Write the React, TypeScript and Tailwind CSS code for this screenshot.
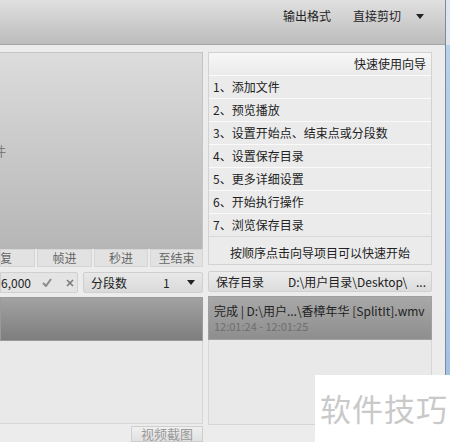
import React from "react";

const steps = [
  "1、添加文件",
  "2、预览播放",
  "3、设置开始点、结束点或分段数",
  "4、设置保存目录",
  "5、更多详细设置",
  "6、开始执行操作",
  "7、浏览保存目录",
];

function Caret() {
  return (
    <svg width="8" height="5" viewBox="0 0 8 5" className="shrink-0">
      <path d="M0 0 L8 0 L4 5 Z" fill="#222" />
    </svg>
  );
}

export default function App() {
  return (
    <div
      className="relative flex h-[442px] w-[450px] overflow-hidden bg-[#ececec] text-[12px] text-[#222]"
      style={{ fontFamily: '"Microsoft YaHei", "Noto Sans CJK SC", sans-serif' }}
    >
      <div className="flex w-[445px] flex-col">
        {/* top toolbar */}
        <div className="flex h-[45px] shrink-0 items-center justify-end border-b border-[#a6a6a6] bg-gradient-to-b from-[#e0e0e0] to-[#bcbcbc] pr-[21px] pb-[12px]">
          <span className="mr-[22px]">输出格式</span>
          <span className="mr-[15px]">直接剪切</span>
          <Caret />
        </div>

        <div className="flex flex-1 pt-[7px]">
          {/* left column */}
          <div className="flex w-[203px] shrink-0 flex-col">
            <div className="flex h-[197px] items-center border-t border-r border-[#c4c4c4] bg-gradient-to-b from-[#dcdcdc] to-[#b6b6b6]">
              <span className="-ml-[7px] text-[13px] text-[#7a7a7a]">件</span>
            </div>
            <div className="flex h-[18px] gap-[2px] text-[#666]">
              <div className="flex w-[35px] items-center justify-end overflow-hidden border border-[#d6d6d6] bg-[#e2e2e2] pr-[22px] whitespace-nowrap">
                恢复
              </div>
              <div className="flex w-[55px] items-center justify-center border border-[#d6d6d6] bg-[#e2e2e2]">帧进</div>
              <div className="flex w-[54px] items-center justify-center border border-[#d6d6d6] bg-[#e2e2e2]">秒进</div>
              <div className="flex w-[53px] items-center justify-center border border-[#d6d6d6] bg-[#e2e2e2]">至结束</div>
            </div>
            <div className="mt-[5px] flex h-[21px] gap-[5px]">
              <div className="flex w-[78px] items-center overflow-hidden rounded-r-[2px] border border-[#d0d0d0] bg-[#e4e4e4] whitespace-nowrap">
                <span className="w-[28px] shrink-0 text-right">6,000</span>
                <svg width="10" height="9" viewBox="0 0 10 9" className="ml-[13px]">
                  <path d="M1 5 L4 8 L9 1" stroke="#8a8a8a" strokeWidth="2" fill="none" />
                </svg>
                <svg width="8" height="8" viewBox="0 0 8 8" className="ml-[14px]">
                  <path d="M1 1 L7 7 M7 1 L1 7" stroke="#7a7a7a" strokeWidth="1.6" />
                </svg>
              </div>
              <div className="flex w-[120px] items-center rounded-[2px] border border-[#cfcfcf] bg-gradient-to-b from-[#e8e8e8] to-[#dadada] pl-[7px] pr-[7px]">
                <span>分段数</span>
                <span className="ml-[36px] flex-1">1</span>
                <Caret />
              </div>
            </div>
            <div className="mt-[4px] h-[44px] border border-[#9a9a9a] bg-gradient-to-b from-[#a2a2a2] to-[#7e7e7e]" />
            <div className="flex-1 border-r border-b border-[#d6d6d6] bg-[#e9e9e9]" />
            <div className="mt-[2px] flex h-[16px] justify-end">
              <div className="flex w-[72px] items-center justify-center border border-[#cfcfcf] bg-gradient-to-b from-[#f0f0f0] to-[#e0e0e0] text-[13px] text-[#999]">
                视频截图
              </div>
            </div>
          </div>

          {/* right column */}
          <div className="ml-[5px] flex w-[224px] shrink-0 flex-col">
            <div className="flex flex-col border border-[#d2d2d2] bg-[#ebebeb]">
              <div className="flex h-[22px] items-center justify-end bg-gradient-to-b from-[#f7f7f7] to-[#eaeaea] pr-[5px]">
                快速使用向导
              </div>
              {steps.map((s) => (
                <div key={s} className="flex h-[23px] items-center border-t border-[#fafafa] pl-[4px]">
                  {s}
                </div>
              ))}
              <div className="flex h-[28px] items-end justify-center border-t border-[#d8d8d8] pb-[2px]">
                按顺序点击向导项目可以快速开始
              </div>
            </div>
            <div className="mt-[6px] flex h-[21px] items-center rounded-[2px] border border-[#d0d0d0] bg-gradient-to-b from-[#ececec] to-[#dcdcdc] pl-[7px] pr-[5px] whitespace-nowrap">
              <span>保存目录</span>
              <span className="ml-[24px] flex-1">D:\用户目录\Desktop\</span>
              <span>...</span>
            </div>
            <div className="mt-[4px] flex h-[44px] flex-col justify-center gap-[1px] border border-[#a0a0a0] bg-gradient-to-b from-[#a8a8a8] to-[#8e8e8e] pl-[5px] whitespace-nowrap">
              <span className="leading-[15px]">完成 | D:\用户...\香樟年华 [SplitIt].wmv</span>
              <span className="text-[11px] leading-[14px] text-[#6e6e6e]">12:01:24 - 12:01:25</span>
            </div>
            <div className="h-[85px] border-r border-b border-l border-[#d6d6d6] bg-[#e9e9e9]" />
          </div>
          <div className="flex-1" />
        </div>
      </div>
      <div className="w-[1px] bg-[#7d8a99]" />
      <div className="flex w-[4px] flex-col">
        <div className="h-[45px] bg-[#dfe6ee]" />
        <div className="flex-1 bg-gradient-to-b from-[#b9d1ea] to-[#9fbfe2]" />
      </div>

      {/* watermark */}
      <div className="absolute left-[315px] top-[375px] flex h-[67px] w-[135px] items-center bg-white pl-[5px] text-[31px] tracking-[1px] text-[#c9c9c9]">
        软件技巧
      </div>
    </div>
  );
}
